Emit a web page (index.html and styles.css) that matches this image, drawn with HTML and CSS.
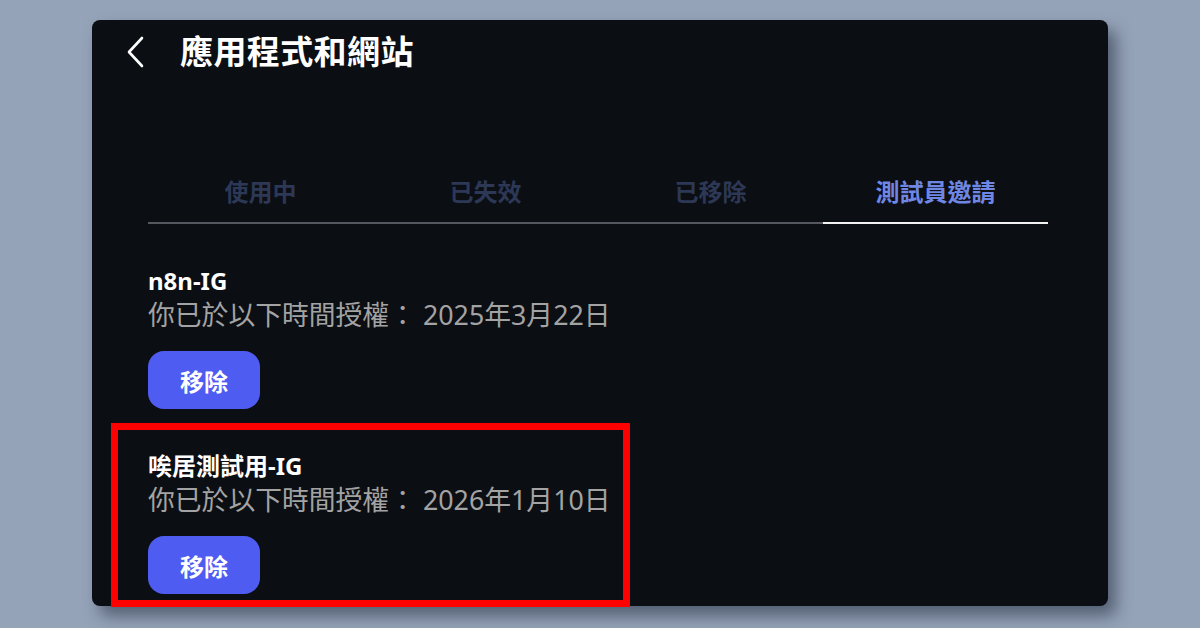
FILE: index.html
```html
<!DOCTYPE html>
<html lang="zh-Hant">
<head>
<meta charset="utf-8">
<title>應用程式和網站</title>
<link rel="stylesheet" href="styles.css">
</head>
<body>
<div class="stage">
  <div class="panel">
    <div class="header">
      <svg class="back" width="20" height="32" viewBox="0 0 20 32" aria-hidden="true">
        <path d="M16 2 L3 16 L16 30" fill="none" stroke="#ffffff" stroke-width="2.6" stroke-linecap="round" stroke-linejoin="round"/>
      </svg>
      <h1 class="title">應用程式和網站</h1>
    </div>
    <div class="tabs">
      <div class="tab">使用中</div>
      <div class="tab">已失效</div>
      <div class="tab">已移除</div>
      <div class="tab active">測試員邀請</div>
    </div>
    <div class="list">
      <div class="item">
        <div class="item-title">n8n-IG</div>
        <div class="item-sub">你已於以下時間授權： 2025年3月22日</div>
        <button class="btn">移除</button>
      </div>
      <div class="item highlighted">
        <div class="item-title">唉居測試用-IG</div>
        <div class="item-sub">你已於以下時間授權： 2026年1月10日</div>
        <button class="btn">移除</button>
      </div>
    </div>
  </div>
</div>
</body>
</html>
```

FILE: styles.css
```css
*, *::before, *::after { box-sizing: border-box; }
html, body { margin: 0; padding: 0; }
body {
  width: 1200px;
  height: 628px;
  background: #95a3b8;
  font-family: "Noto Sans", "Noto Sans CJK TC", sans-serif;
  overflow: hidden;
}
.stage {
  padding: 20px 92px 0 92px;
}
.panel {
  position: relative;
  width: 1016px;
  height: 586px;
  background: #0b0e13;
  border-radius: 8px;
  box-shadow: 8px 10px 16px rgba(20, 28, 45, 0.5);
}
.header {
  display: flex;
  align-items: center;
  height: 64px;
  padding-left: 34px;
}
.back {
  display: block;
  width: 20px;
  height: 32px;
}
.title {
  margin: 0 0 0 34px;
  font-size: 33px;
  font-weight: 700;
  color: #ffffff;
  line-height: 40px;
  letter-spacing: 0.4px;
}
.tabs {
  display: flex;
  margin: 91px 0 0 56px;
  width: 900px;
  border-bottom: 2px solid #55595f;
}
.tab {
  flex: 1;
  text-align: center;
  font-size: 24px;
  font-weight: 700;
  line-height: 34px;
  padding-bottom: 13px;
  color: #2c3856;
  border-bottom: 2px solid transparent;
  margin-bottom: -2px;
}
.tab.active {
  color: #6f87e4;
  border-bottom-color: #f2f2f2;
}
.list {
  display: flex;
  flex-direction: column;
  gap: 41px;
  padding: 41px 0 0 56px;
}
.item {
  display: flex;
  flex-direction: column;
  align-items: flex-start;
}
.item-title {
  font-size: 24px;
  font-weight: 700;
  color: #ffffff;
  line-height: 32px;
}
.item-sub {
  font-size: 26.8px;
  font-weight: 400;
  color: #a3a3a3;
  line-height: 36px;
}
.btn {
  margin-top: 18px;
  width: 112px;
  height: 58px;
  border: none;
  border-radius: 16px;
  background: #4f5cf1;
  color: #ffffff;
  font-family: "Noto Sans", "Noto Sans CJK TC", sans-serif;
  font-size: 24px;
  font-weight: 700;
  padding: 0;
}
.highlighted {
  position: relative;
}
.highlighted::before {
  content: "";
  position: absolute;
  left: -37px;
  top: -27px;
  width: 519px;
  height: 184px;
  border: 7px solid #ff0000;
  pointer-events: none;
}
```
